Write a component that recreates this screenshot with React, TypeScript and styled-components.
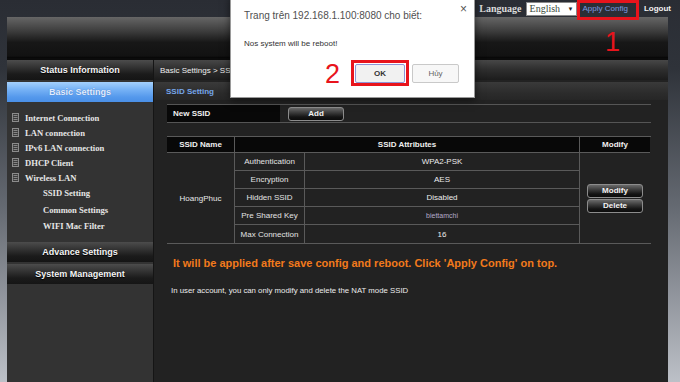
import React from 'react';
import styled, { createGlobalStyle } from 'styled-components';

const GlobalStyle = createGlobalStyle`
  * {
    margin: 0;
    padding: 0;
    box-sizing: border-box;
  }
  html, body {
    width: 680px;
    height: 382px;
    overflow: hidden;
    font-family: "Liberation Sans", Arial, sans-serif;
  }
`;

const Page = styled.div`
  position: relative;
  width: 680px;
  height: 382px;
  overflow: hidden;
  display: flex;
  flex-direction: column;
  padding: 0 12px 0 7px;
  background: linear-gradient(to bottom, #2a2d34 0%, #2f333a 18%, #666b73 55%, #bcc0c7 100%);
`;

const TopBar = styled.div`
  height: 17px;
  display: flex;
  align-items: center;
  justify-content: flex-end;
  margin-right: -3px;
`;

const LangLabel = styled.span`
  font: bold 10px "Liberation Serif", "Times New Roman", serif;
  color: #dcdcdc;
`;

const Select = styled.div`
  width: 51px;
  height: 14px;
  margin-left: 4px;
  background: #fff;
  border: 1px solid #8a8a8a;
  display: flex;
  align-items: center;
  justify-content: space-between;
  padding: 0 2px 0 3px;
  font: 10px "Liberation Serif", "Times New Roman", serif;
  color: #3a4a3a;
`;

const Arrow = styled.span`
  font-size: 6px;
  color: #222;
`;

const TopLink = styled.span<{ $blue?: boolean }>`
  font-size: 8px;
  font-weight: ${(p) => (p.$blue ? 'normal' : 'bold')};
  color: ${(p) => (p.$blue ? '#7b9be0' : '#f2f2f2')};
  margin-left: ${(p) => (p.$blue ? '6px' : '16px')};
`;

const Banner = styled.div`
  height: 43px;
  background: linear-gradient(to bottom, #666 0%, #3c3c3c 35%, #171717 62%, #121212 95%, #050505 100%);
  border-bottom: 2px solid #0b0b0b;
`;

const Body = styled.div`
  flex: 1;
  display: flex;
  min-height: 0;
`;

const Sidebar = styled.div`
  width: 146px;
  background: #333;
  display: flex;
  flex-direction: column;
`;

const NavHeader = styled.div<{ $active?: boolean }>`
  height: 20px;
  margin-bottom: 2px;
  display: flex;
  align-items: center;
  justify-content: center;
  font-weight: bold;
  font-size: 9px;
  color: ${(p) => (p.$active ? '#e2edff' : '#f4f4f4')};
  text-shadow: ${(p) => (p.$active ? '0 0 1px #3a6fb8' : '0 1px 1px #000')};
  background: ${(p) =>
    p.$active
      ? 'linear-gradient(to bottom, #a4d0fc 0%, #79b4f6 35%, #5599ec 75%, #4a8fe6 100%)'
      : 'linear-gradient(to bottom, #4c4c4c 0%, #303030 40%, #1b1b1b 70%, #151515 100%)'};
`;

const NavList = styled.div`
  padding: 6px 0 7px;
`;

const NavItem = styled.div`
  height: 15px;
  display: flex;
  align-items: center;
  gap: 6px;
  padding-left: 5px;
  font: bold 8.6px "Liberation Serif", "Times New Roman", serif;
  color: #e6e6e6;
  white-space: nowrap;
`;

const SubItem = styled.div`
  height: 16.5px;
  display: flex;
  align-items: center;
  padding-left: 36px;
  font: bold 8.6px "Liberation Serif", "Times New Roman", serif;
  color: #e6e6e6;
  white-space: nowrap;
`;

const Main = styled.div`
  flex: 1;
  background: #222;
  border-left: 1px solid #151515;
  display: flex;
  flex-direction: column;
`;

const Breadcrumb = styled.div`
  height: 20px;
  margin-bottom: 2px;
  display: flex;
  align-items: center;
  padding-left: 6px;
  font-size: 8px;
  color: #eee;
  background: linear-gradient(to bottom, #474747 0%, #2f2f2f 45%, #1c1c1c 100%);
`;

const SectionTitle = styled.div`
  height: 18px;
  display: flex;
  align-items: center;
  padding-left: 12px;
  font-size: 8px;
  font-weight: bold;
  color: #76a6ea;
  background: linear-gradient(to bottom, #3a3a3a 0%, #2c2c2c 60%, #262626 100%);
`;

const Content = styled.div`
  padding: 4px 17px 0 13px;
  display: flex;
  flex-direction: column;
`;

const NewRow = styled.div`
  height: 19px;
  display: flex;
  border-top: 1px solid #555;
  border-bottom: 1px solid #555;
`;

const NewLabel = styled.div`
  width: 113px;
  background: #080808;
  display: flex;
  align-items: center;
  padding-left: 6px;
  font-size: 8px;
  font-weight: bold;
  color: #f0f0f0;
`;

const ButtonCell = styled.div`
  padding-left: 8px;
  display: flex;
  align-items: center;
`;

const DarkButton = styled.div<{ $w: number }>`
  width: ${(p) => p.$w}px;
  height: 14px;
  display: flex;
  align-items: center;
  justify-content: center;
  border: 1px solid #8c8c8c;
  border-radius: 3px;
  font-size: 8px;
  font-weight: bold;
  color: #f2f2f2;
  background: linear-gradient(to bottom, #6a6a6a 0%, #3a3a3a 40%, #141414 75%, #0c0c0c 100%);
`;

const Table = styled.div`
  margin-top: 13px;
  display: grid;
  grid-template-columns: 68px 70px 275px 70px;
  grid-template-rows: 16px repeat(5, 18px);
  border-top: 1px solid #5a5a5a;
  border-bottom: 1px solid #5a5a5a;
`;

const HeadCell = styled.div<{ $span?: number; $last?: boolean }>`
  grid-column: span ${(p) => p.$span || 1};
  background: #080808;
  border-right: ${(p) => (p.$last ? 'none' : '1px solid #5a5a5a')};
  border-bottom: 1px solid #5a5a5a;
  display: flex;
  align-items: center;
  justify-content: center;
  font-size: 8px;
  font-weight: bold;
  color: #f0f0f0;
`;

const SideCell = styled.div<{ $col: number; $last?: boolean }>`
  grid-column: ${(p) => p.$col};
  grid-row: 2 / span 5;
  border-right: ${(p) => (p.$last ? 'none' : '1px solid #5a5a5a')};
  display: flex;
  flex-direction: column;
  align-items: center;
  justify-content: center;
  gap: 1px;
  font-size: 8px;
  color: #e8e8e8;
`;

const AttrName = styled.div<{ $last?: boolean }>`
  grid-column: 2;
  border-right: 1px solid #5a5a5a;
  border-bottom: ${(p) => (p.$last ? 'none' : '1px solid #5a5a5a')};
  display: flex;
  align-items: center;
  justify-content: center;
  font-size: 8px;
  color: #e2e2e2;
`;

const AttrValue = styled.div<{ $last?: boolean; $muted?: boolean }>`
  grid-column: 3;
  border-right: 1px solid #5a5a5a;
  border-bottom: ${(p) => (p.$last ? 'none' : '1px solid #5a5a5a')};
  display: flex;
  align-items: center;
  justify-content: center;
  font-size: ${(p) => (p.$muted ? '7px' : '8px')};
  color: ${(p) => (p.$muted ? '#b3abc9' : '#ececec')};
`;

const Warning = styled.div`
  margin-top: 13px;
  padding-left: 6px;
  font-size: 11px;
  font-weight: bold;
  color: #f27a1c;
  white-space: nowrap;
`;

const Note = styled.div`
  margin-top: 17px;
  padding-left: 4px;
  font-size: 7.8px;
  color: #ececec;
  white-space: nowrap;
`;

const Dialog = styled.div`
  position: absolute;
  left: 230px;
  top: -4px;
  width: 245px;
  height: 102px;
  background: #fff;
  border: 1px solid #9a9a9a;
  box-shadow: 0 2px 8px rgba(0, 0, 0, 0.55);
  display: flex;
  flex-direction: column;
  padding: 13px 15px 0 13px;
`;

const DialogTitle = styled.div`
  font-size: 10px;
  line-height: 12px;
  color: #505050;
`;

const Close = styled.span`
  position: absolute;
  right: 7px;
  top: 5px;
  font-size: 12px;
  color: #555;
`;

const DialogText = styled.div`
  margin-top: 17px;
  font-size: 8px;
  line-height: 10px;
  color: #333;
`;

const DialogButtons = styled.div`
  margin-top: 15px;
  display: flex;
  justify-content: flex-end;
  gap: 7px;
`;

const LightButton = styled.div<{ $focus?: boolean; $w: number }>`
  width: ${(p) => p.$w}px;
  height: 19px;
  display: flex;
  align-items: center;
  justify-content: center;
  font-size: 8px;
  font-weight: ${(p) => (p.$focus ? 'bold' : 'normal')};
  color: ${(p) => (p.$focus ? '#333' : '#666')};
  background: ${(p) => (p.$focus ? '#f1f1f1' : '#f7f7f7')};
  border: 1px solid ${(p) => (p.$focus ? '#8f94d6' : '#c9c9c9')};
  border-radius: 2px;
`;

const RedBox = styled.div<{ $x: number; $y: number; $w: number; $h: number }>`
  position: absolute;
  left: ${(p) => p.$x}px;
  top: ${(p) => p.$y}px;
  width: ${(p) => p.$w}px;
  height: ${(p) => p.$h}px;
  border: 3px solid #e8141c;
`;

const RedNumber = styled.span<{ $x: number; $y: number }>`
  position: absolute;
  left: ${(p) => p.$x}px;
  top: ${(p) => p.$y}px;
  font-size: 27px;
  line-height: 27px;
  color: #e8141c;
`;

const DocIcon = () => (
  <svg width="7" height="9" viewBox="0 0 7 9">
    <rect x="0.5" y="0.5" width="6" height="8" fill="#3d3d3d" stroke="#8c8c8c" />
    <path d="M1.5 2.5h4M1.5 4.5h4M1.5 6.5h4" stroke="#9a9a9a" strokeWidth="0.8" />
  </svg>
);

const navItems = ['Internet Connection', 'LAN connection', 'IPv6 LAN connection', 'DHCP Client', 'Wireless LAN'];
const subItems = ['SSID Setting', 'Common Settings', 'WIFI Mac Filter'];

const attrs: { name: string; value: string; muted?: boolean }[] = [
  { name: 'Authentication', value: 'WPA2-PSK' },
  { name: 'Encryption', value: 'AES' },
  { name: 'Hidden SSID', value: 'Disabled' },
  { name: 'Pre Shared Key', value: 'biettamchi', muted: true },
  { name: 'Max Connection', value: '16' },
];

export default function App() {
  return (
    <>
      <GlobalStyle />
      <Page>
        <TopBar>
          <LangLabel>Language</LangLabel>
          <Select>
            English
            <Arrow>▼</Arrow>
          </Select>
          <TopLink $blue>Apply Config</TopLink>
          <TopLink>Logout</TopLink>
        </TopBar>
        <Banner />
        <Body>
          <Sidebar>
            <NavHeader>Status Information</NavHeader>
            <NavHeader $active>Basic Settings</NavHeader>
            <NavList>
              {navItems.map((item) => (
                <NavItem key={item}>
                  <DocIcon />
                  {item}
                </NavItem>
              ))}
              {subItems.map((item) => (
                <SubItem key={item}>{item}</SubItem>
              ))}
            </NavList>
            <NavHeader>Advance Settings</NavHeader>
            <NavHeader>System Management</NavHeader>
          </Sidebar>
          <Main>
            <Breadcrumb>Basic Settings &gt; SSID Setting</Breadcrumb>
            <SectionTitle>SSID Setting</SectionTitle>
            <Content>
              <NewRow>
                <NewLabel>New SSID</NewLabel>
                <ButtonCell>
                  <DarkButton $w={56}>Add</DarkButton>
                </ButtonCell>
              </NewRow>
              <Table>
                <HeadCell>SSID Name</HeadCell>
                <HeadCell $span={2}>SSID Attributes</HeadCell>
                <HeadCell $last>Modify</HeadCell>
                <SideCell $col={1}>HoangPhuc</SideCell>
                {attrs.map((a, i) => (
                  <React.Fragment key={a.name}>
                    <AttrName $last={i === attrs.length - 1} style={{ gridRow: i + 2 }}>
                      {a.name}
                    </AttrName>
                    <AttrValue $last={i === attrs.length - 1} $muted={a.muted} style={{ gridRow: i + 2 }}>
                      {a.value}
                    </AttrValue>
                  </React.Fragment>
                ))}
                <SideCell $col={4} $last>
                  <DarkButton $w={56}>Modify</DarkButton>
                  <DarkButton $w={56}>Delete</DarkButton>
                </SideCell>
              </Table>
              <Warning>It will be applied after save config and reboot. Click 'Apply Config' on top.</Warning>
              <Note>In user account, you can only modify and delete the NAT mode SSID</Note>
            </Content>
          </Main>
        </Body>

        <Dialog>
          <Close>×</Close>
          <DialogTitle>Trang trên 192.168.1.100:8080 cho biết:</DialogTitle>
          <DialogText>Nos system will be reboot!</DialogText>
          <DialogButtons>
            <LightButton $focus $w={50}>OK</LightButton>
            <LightButton $w={47}>Hủy</LightButton>
          </DialogButtons>
        </Dialog>

        <RedBox $x={577} $y={0} $w={62} $h={20} />
        <RedNumber $x={605} $y={29}>1</RedNumber>
        <RedBox $x={351} $y={60} $w={58} $h={26} />
        <RedNumber $x={325} $y={61}>2</RedNumber>
      </Page>
    </>
  );
}
